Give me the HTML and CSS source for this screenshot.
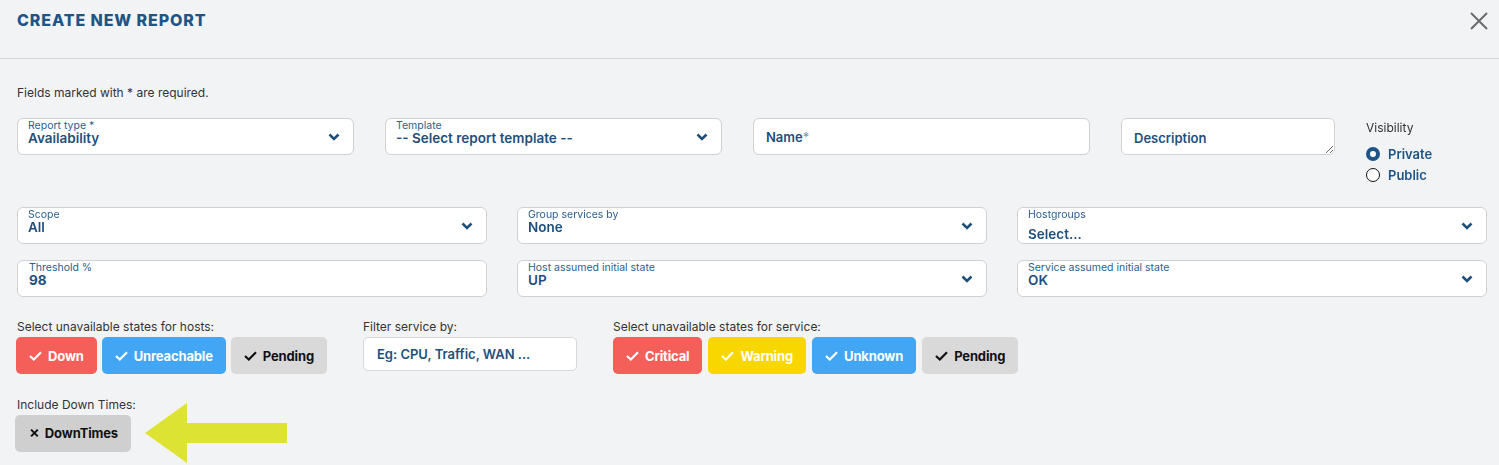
FILE: index.html
```html
<!DOCTYPE html>
<html>
<head>
<meta charset="utf-8">
<link rel="stylesheet" href="styles.css">
</head>
<body>
<div class="modal">
  <header class="head">
    <h1 class="title">CREATE NEW REPORT</h1>
    <svg class="close" width="18" height="18" viewBox="0 0 18 18"><path d="M1 1 L17 17 M17 1 L1 17" stroke="#6b6b6b" stroke-width="2" fill="none"/></svg>
  </header>
  <main class="body">
    <p class="note">Fields marked with * are required.</p>

    <div class="row1">
      <div class="field select">
        <div class="ftext"><span class="flabel">Report type *</span><span class="fval">Availability</span></div>
        <svg class="chev" width="12" height="8" viewBox="0 0 12 8"><path d="M1.5 1.5 L6 6 L10.5 1.5" stroke="#1f4f7d" stroke-width="2.6" fill="none"/></svg>
      </div>
      <div class="field select">
        <div class="ftext"><span class="flabel">Template</span><span class="fval">-- Select report template --</span></div>
        <svg class="chev" width="12" height="8" viewBox="0 0 12 8"><path d="M1.5 1.5 L6 6 L10.5 1.5" stroke="#1f4f7d" stroke-width="2.6" fill="none"/></svg>
      </div>
      <div class="field plain"><span class="ph">Name<span class="star">*</span></span></div>
      <textarea class="field desc" placeholder="Description"></textarea>
      <div class="visibility">
        <div class="vlabel">Visibility</div>
        <div class="radio"><span class="dot on"></span><span class="rtext">Private</span></div>
        <div class="radio"><span class="dot"></span><span class="rtext">Public</span></div>
      </div>
    </div>

    <div class="grid3">
      <div class="field select">
        <div class="ftext"><span class="flabel">Scope</span><span class="fval">All</span></div>
        <svg class="chev" width="12" height="8" viewBox="0 0 12 8"><path d="M1.5 1.5 L6 6 L10.5 1.5" stroke="#1f4f7d" stroke-width="2.6" fill="none"/></svg>
      </div>
      <div class="field select">
        <div class="ftext"><span class="flabel">Group services by</span><span class="fval">None</span></div>
        <svg class="chev" width="12" height="8" viewBox="0 0 12 8"><path d="M1.5 1.5 L6 6 L10.5 1.5" stroke="#1f4f7d" stroke-width="2.6" fill="none"/></svg>
      </div>
      <div class="field select">
        <div class="ftext"><span class="flabel">Hostgroups</span><span class="fval low">Select...</span></div>
        <svg class="chev" width="12" height="8" viewBox="0 0 12 8"><path d="M1.5 1.5 L6 6 L10.5 1.5" stroke="#1f4f7d" stroke-width="2.6" fill="none"/></svg>
      </div>
      <div class="field select thr">
        <div class="ftext"><span class="flabel">Threshold %</span><span class="fval">98</span></div>
      </div>
      <div class="field select">
        <div class="ftext"><span class="flabel">Host assumed initial state</span><span class="fval">UP</span></div>
        <svg class="chev" width="12" height="8" viewBox="0 0 12 8"><path d="M1.5 1.5 L6 6 L10.5 1.5" stroke="#1f4f7d" stroke-width="2.6" fill="none"/></svg>
      </div>
      <div class="field select">
        <div class="ftext"><span class="flabel">Service assumed initial state</span><span class="fval">OK</span></div>
        <svg class="chev" width="12" height="8" viewBox="0 0 12 8"><path d="M1.5 1.5 L6 6 L10.5 1.5" stroke="#1f4f7d" stroke-width="2.6" fill="none"/></svg>
      </div>
    </div>

    <div class="states">
      <div class="group">
        <div class="glabel">Select unavailable states for hosts:</div>
        <div class="btns">
          <span class="btn red"><svg width="13" height="10" viewBox="0 0 13 10"><path d="M1 5 L4.8 8.5 L12 1.2" stroke="#fff" stroke-width="2.2" fill="none"/></svg>Down</span>
          <span class="btn blue"><svg width="13" height="10" viewBox="0 0 13 10"><path d="M1 5 L4.8 8.5 L12 1.2" stroke="#fff" stroke-width="2.2" fill="none"/></svg>Unreachable</span>
          <span class="btn gray"><svg width="13" height="10" viewBox="0 0 13 10"><path d="M1 5 L4.8 8.5 L12 1.2" stroke="#111" stroke-width="2.2" fill="none"/></svg>Pending</span>
        </div>
      </div>
      <div class="group">
        <div class="glabel">Filter service by:</div>
        <div class="filter">Eg: CPU, Traffic, WAN ...</div>
      </div>
      <div class="group">
        <div class="glabel">Select unavailable states for service:</div>
        <div class="btns svc">
          <span class="btn red"><svg width="13" height="10" viewBox="0 0 13 10"><path d="M1 5 L4.8 8.5 L12 1.2" stroke="#fff" stroke-width="2.2" fill="none"/></svg>Critical</span>
          <span class="btn yellow"><svg width="13" height="10" viewBox="0 0 13 10"><path d="M1 5 L4.8 8.5 L12 1.2" stroke="#fff" stroke-width="2.2" fill="none"/></svg>Warning</span>
          <span class="btn blue"><svg width="13" height="10" viewBox="0 0 13 10"><path d="M1 5 L4.8 8.5 L12 1.2" stroke="#fff" stroke-width="2.2" fill="none"/></svg>Unknown</span>
          <span class="btn gray"><svg width="13" height="10" viewBox="0 0 13 10"><path d="M1 5 L4.8 8.5 L12 1.2" stroke="#111" stroke-width="2.2" fill="none"/></svg>Pending</span>
        </div>
      </div>
    </div>

    <div class="downtimes">
      <div class="glabel">Include Down Times:</div>
      <div class="dtrow">
        <span class="btn dt"><svg width="10" height="10" viewBox="0 0 10 10"><path d="M1.2 1.2 L8.8 8.8 M8.8 1.2 L1.2 8.8" stroke="#111" stroke-width="2.3" fill="none"/></svg>DownTimes</span>
        <svg class="arrow" width="142" height="60" viewBox="0 0 142 60"><polygon points="0,30 42,0 42,20 142,20 142,40 42,40 42,60" fill="#dde333"/></svg>
      </div>
    </div>
  </main>
</div>
</body>
</html>
```

FILE: styles.css
```css
* { box-sizing: border-box; }
html, body { margin: 0; padding: 0; }
body {
  background: #f2f3f5;
  font-family: Inter, "Noto Sans", sans-serif;
  color: #333;
  width: 1499px;
  height: 465px;
  overflow: hidden;
}
.head {
  height: 59px;
  border-bottom: 1px solid #d4d5d8;
  display: flex;
  align-items: flex-start;
  justify-content: space-between;
  padding: 9px 11px 0 17px;
}
.title {
  margin: 0;
  font-size: 16px;
  font-weight: 800;
  letter-spacing: 0.9px;
  color: #1f5586;
  line-height: 22px;
}
.close { margin-top: 3px; }
.body { padding: 0 17px; }
.note {
  margin: 26px 0 0;
  font-size: 12px;
  line-height: 16px;
  color: #333;
}
.row1 {
  margin-top: 17px;
  display: grid;
  grid-template-columns: 337px 337px 337px 214px auto;
  column-gap: 31px;
  align-items: start;
}
.field {
  height: 37px;
  background: #fff;
  border: 1px solid #cfd0d3;
  border-radius: 6px;
}
.select {
  display: flex;
  align-items: center;
  justify-content: space-between;
  padding: 0 13px 0 10px;
}
.ftext {
  display: flex;
  flex-direction: column;
  align-self: stretch;
  padding-top: 1px;
}
.flabel {
  font-size: 10.5px;
  line-height: 12px;
  color: #2c5f8e;
}
.fval {
  font-size: 13.5px;
  font-weight: 600;
  line-height: 14px;
  margin-top: -1px;
  color: #1f4f7d;
}
.fval.low { margin-top: 6px; }
.thr { padding-left: 11px; }
.thr .fval { font-weight: 700; }
.plain {
  display: flex;
  align-items: center;
  padding-left: 12px;
}
.ph {
  font-size: 13px;
  font-weight: 600;
  color: #1f4f7d;
}
.star { color: #7a97b3; font-weight: 400; }
.desc {
  display: block;
  resize: vertical;
  padding: 11px 12px;
  font-family: inherit;
  font-size: 13px;
  font-weight: 600;
  color: #1f4f7d;
  outline: none;
}
.desc::placeholder { color: #1f4f7d; opacity: 1; }
.visibility { padding-top: 2px; }
.vlabel {
  font-size: 12px;
  line-height: 16px;
  color: #333;
  margin-bottom: 7px;
}
.radio {
  display: flex;
  align-items: center;
  gap: 8px;
  height: 21px;
}
.dot {
  width: 14px;
  height: 14px;
  border-radius: 50%;
  border: 1.5px solid #111;
  background: #fff;
}
.dot.on {
  border: 4px solid #1f5586;
}
.rtext {
  font-size: 13px;
  font-weight: 600;
  color: #1f5586;
}
.grid3 {
  margin-top: 22px;
  display: grid;
  grid-template-columns: 470px 470px 470px;
  column-gap: 30px;
  row-gap: 16px;
}
.states {
  margin-top: 22px;
  display: flex;
  gap: 36px;
  align-items: flex-start;
}
.glabel {
  font-size: 12px;
  line-height: 16px;
  color: #333;
  margin-bottom: 2px;
}
.btns { display: flex; gap: 5px; margin-left: -1px; }
.btns.svc { gap: 6px; margin-left: 0; }
.btn {
  height: 37px;
  display: inline-flex;
  align-items: center;
  gap: 6px;
  padding: 0 13px;
  border-radius: 5px;
  font-size: 13px;
  font-weight: 700;
  letter-spacing: -0.15px;
  color: #fff;
}
.red { background: #f55f5a; }
.blue { background: #42a6f5; }
.yellow { background: #f8d600; }
.gray { background: #d9d9d9; color: #111; }
.filter {
  width: 214px;
  height: 34px;
  background: #fff;
  border: 1px solid #d6d7da;
  border-radius: 5px;
  display: flex;
  align-items: center;
  padding-left: 13px;
  font-size: 13px;
  font-weight: 600;
  color: #1f4f7d;
}
.downtimes { margin-top: 23px; }
.downtimes .glabel { margin-bottom: 0; }
.dtrow {
  display: flex;
  align-items: center;
  margin-top: -10px;
}
.dt {
  height: 37px;
  width: 116px;
  margin-left: -2px;
  padding: 0 13px 0 15px;
  gap: 6px;
  background: #cfcfcf;
  color: #111;
}
.arrow { margin-left: 14px; }
```
